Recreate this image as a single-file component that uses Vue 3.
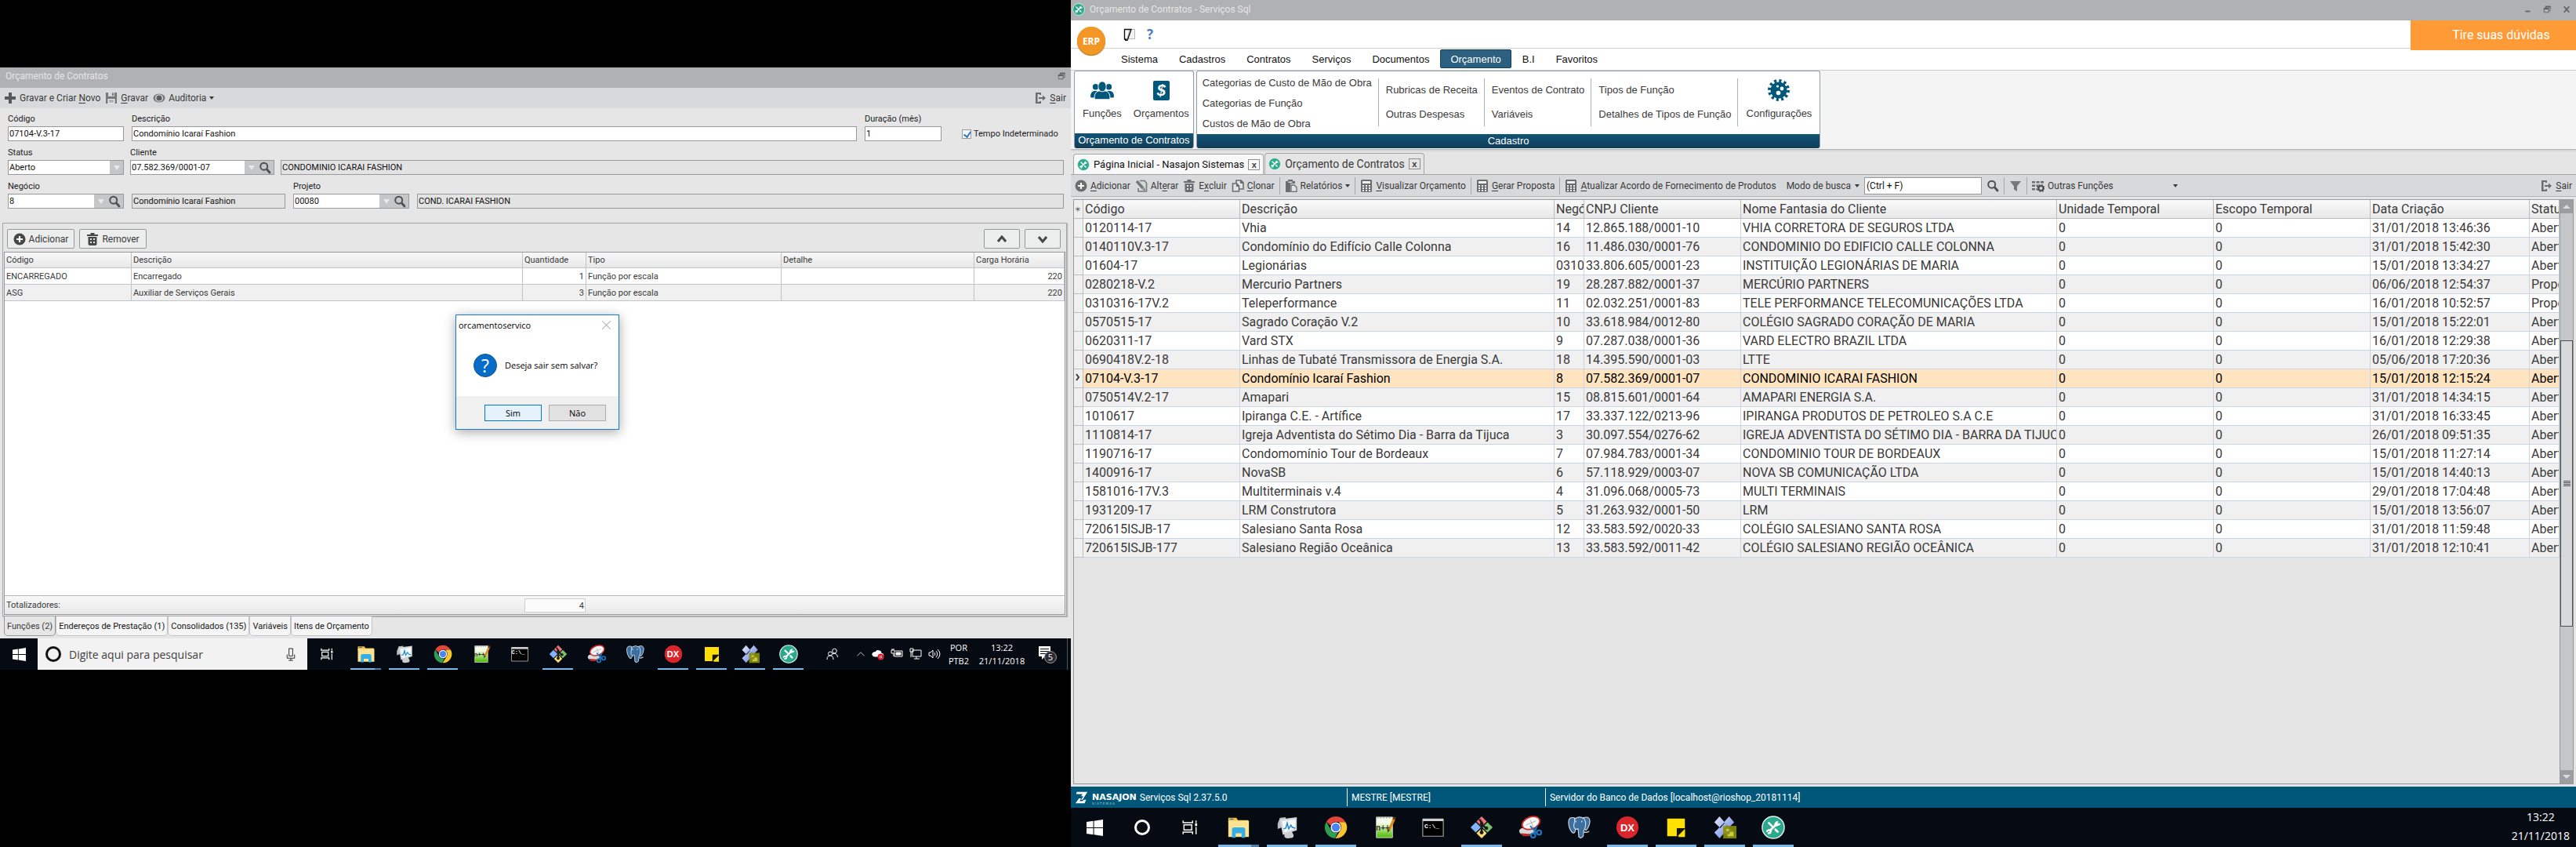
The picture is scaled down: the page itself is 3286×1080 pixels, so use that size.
<script setup>
import { ref } from 'vue'

const codigo = ref('07104-V.3-17')
const descricao = ref('Condomínio Icaraí Fashion')
const duracao = ref('1')
const indeterminado = ref(true)
const cliente = ref('07.582.369/0001-07')
const negocio = ref('8')
const projeto = ref('00080')
const busca = ref('(Ctrl + F)')

const funcoes = [
  { codigo: 'ENCARREGADO', descricao: 'Encarregado', qtd: 1, tipo: 'Função por escala', detalhe: '', carga: 220 },
  { codigo: 'ASG', descricao: 'Auxiliar de Serviços Gerais', qtd: 3, tipo: 'Função por escala', detalhe: '', carga: 220 },
]
const abasInferiores = ['Funções (2)', 'Endereços de Prestação (1)', 'Consolidados (135)', 'Variáveis', 'Itens de Orçamento']

const menus = ['Sistema', 'Cadastros', 'Contratos', 'Serviços', 'Documentos', 'Orçamento', 'B.I', 'Favoritos']
const cadastros = [
  ['Categorias de Custo de Mão de Obra', 'Categorias de Função', 'Custos de Mão de Obra'],
  ['Rubricas de Receita', 'Outras Despesas'],
  ['Eventos de Contrato', 'Variáveis'],
  ['Tipos de Função', 'Detalhes de Tipos de Função'],
]

const colunas = ['Código', 'Descrição', 'Negócio', 'CNPJ Cliente', 'Nome Fantasia do Cliente', 'Unidade Temporal', 'Escopo Temporal', 'Data Criação', 'Status']
const contratos = [
  ['0120114-17', 'Vhia', '14', '12.865.188/0001-10', 'VHIA CORRETORA DE SEGUROS LTDA', '31/01/2018 13:46:36', 'Aberto'],
  ['0140110V.3-17', 'Condomínio do Edifício Calle Colonna', '16', '11.486.030/0001-76', 'CONDOMINIO DO EDIFICIO CALLE COLONNA', '31/01/2018 15:42:30', 'Aberto'],
  ['01604-17', 'Legionárias', '0310', '33.806.605/0001-23', 'INSTITUIÇÃO LEGIONÁRIAS DE MARIA', '15/01/2018 13:34:27', 'Aberto'],
  ['0280218-V.2', 'Mercurio Partners', '19', '28.287.882/0001-37', 'MERCÚRIO PARTNERS', '06/06/2018 12:54:37', 'Proposta'],
  ['0310316-17V.2', 'Teleperformance', '11', '02.032.251/0001-83', 'TELE PERFORMANCE TELECOMUNICAÇÕES LTDA', '16/01/2018 10:52:57', 'Proposta'],
  ['0570515-17', 'Sagrado Coração V.2', '10', '33.618.984/0012-80', 'COLÉGIO SAGRADO CORAÇÃO DE MARIA', '15/01/2018 15:22:01', 'Aberto'],
  ['0620311-17', 'Vard STX', '9', '07.287.038/0001-36', 'VARD ELECTRO BRAZIL LTDA', '16/01/2018 12:29:38', 'Aberto'],
  ['0690418V.2-18', 'Linhas de Tubaté Transmissora de Energia S.A.', '18', '14.395.590/0001-03', 'LTTE', '05/06/2018 17:20:36', 'Aberto'],
  ['07104-V.3-17', 'Condomínio Icaraí Fashion', '8', '07.582.369/0001-07', 'CONDOMINIO ICARAI FASHION', '15/01/2018 12:15:24', 'Aberto'],
  ['0750514V.2-17', 'Amapari', '15', '08.815.601/0001-64', 'AMAPARI ENERGIA S.A.', '31/01/2018 14:34:15', 'Aberto'],
  ['1010617', 'Ipiranga C.E. - Artífice', '17', '33.337.122/0213-96', 'IPIRANGA PRODUTOS DE PETROLEO S.A C.E', '31/01/2018 16:33:45', 'Aberto'],
  ['1110814-17', 'Igreja Adventista do Sétimo Dia - Barra da Tijuca', '3', '30.097.554/0276-62', 'IGREJA ADVENTISTA DO SÉTIMO DIA - BARRA DA TIJUCA', '26/01/2018 09:51:35', 'Aberto'],
  ['1190716-17', 'Condomomínio Tour de Bordeaux', '7', '07.984.783/0001-34', 'CONDOMINIO TOUR DE BORDEAUX', '15/01/2018 11:27:14', 'Aberto'],
  ['1400916-17', 'NovaSB', '6', '57.118.929/0003-07', 'NOVA SB COMUNICAÇÃO LTDA', '15/01/2018 14:40:13', 'Aberto'],
  ['1581016-17V.3', 'Multiterminais v.4', '4', '31.096.068/0005-73', 'MULTI TERMINAIS', '29/01/2018 17:04:48', 'Aberto'],
  ['1931209-17', 'LRM Construtora', '5', '31.263.932/0001-50', 'LRM', '15/01/2018 13:56:07', 'Aberto'],
  ['720615ISJB-17', 'Salesiano Santa Rosa', '12', '33.583.592/0020-33', 'COLÉGIO SALESIANO SANTA ROSA', '31/01/2018 11:59:48', 'Aberto'],
  ['720615ISJB-177', 'Salesiano Região Oceânica', '13', '33.583.592/0011-42', 'COLÉGIO SALESIANO REGIÃO OCEÂNICA', '31/01/2018 12:10:41', 'Aberto'],
].map((r) => ({ cells: [r[0], r[1], r[2], r[3], r[4], '0', '0', r[5], r[6]], ativo: r[0] === '07104-V.3-17' }))

const apps = [
  { id: 'folder', on: true, multi: true },
  { id: 'monitor', on: true },
  { id: 'chrome', on: true },
  { id: 'notepad', text: 'n++' },
  { id: 'cmd', text: 'C:\\_' },
  { id: 'git', on: true },
  { id: 'snip' },
  { id: 'elephant' },
  { id: 'dx', on: true, text: 'DX' },
  { id: 'sticky', on: true },
  { id: 'diamonds', on: true },
  { id: 'tools', on: true },
]
</script>

<template>
  <div class="desktop">
    <svg class="sprite" aria-hidden="true">
      <linearGradient id="g-pad" x1="0" y1="0" x2="0" y2="1"><stop offset="0.3" stop-color="#f4fbe8" /><stop offset="0.9" stop-color="#5fc21a" /></linearGradient>
      <linearGradient id="g-dia" x1="0" y1="0" x2="1" y2="1"><stop offset="0" stop-color="#e3eaff" /><stop offset="1" stop-color="#5a78d8" /></linearGradient>
      <symbol id="i-win" viewBox="0 0 16 16"><path fill="#fff" d="M0 2.3 6.5 1.4V7.6H0zM7.3 1.3 16 0v7.6H7.3zM0 8.4h6.5v6.2L0 13.7zM7.3 8.4H16V16l-8.7-1.3z" /></symbol>
      <symbol id="i-task" viewBox="0 0 20 20"><g fill="none" stroke="#fff" stroke-width="1.3"><path d="M2 2v2.5h11V2M3 7h9v6H3zM2 18v-2.500h11V18M17 2v3M17 9.500V18" /></g><path fill="#fff" d="M15.800 5.500h2.500v3h-2.500z" /></symbol>
      <symbol id="i-folder" viewBox="0 0 32 32"><path fill="#f5c33b" d="M2 3h11l2 3h14v4H2z" /><path fill="#ffe395" d="M2 7h28v22H2z" /><path fill="#37ade6" d="M7 30V19q0-3 3-3h12q3 0 3 3v11h-5v-6h-8v6z" /><path fill="#3f6db5" d="M4 4h5v1.500H4z" /></symbol>
      <symbol id="i-monitor" viewBox="0 0 32 32"><path fill="#b9bdc0" d="M3 11 6 3l8-1v12L3 18z" /><path fill="#c9cdd0" d="M12 27q0-3 3-4l7-2 2 4q2 3-1 5l-6 1q-5 0-5-4z" /><path fill="#d4d8db" d="M6 5 29 2v18L10 26z" /><path fill="#f4f9fd" d="M9 7.500 27 5v12.500L12 23z" /><path d="m11 18 3-1 2-7 2 8 3-5 2 3 4 1" fill="none" stroke="#1d87c9" stroke-width="1.600" /></symbol>
      <symbol id="i-chrome" viewBox="0 0 32 32"><path fill="#e2453a" d="M16 1a15 15 0 0 1 13 7.500H16a7.500 7.500 0 0 0-7 5L3.200 8.200A15 15 0 0 1 16 1z" /><path fill="#fbc52d" d="M29.200 8.700A15 15 0 0 1 15.500 31l7-11.500a7.500 7.500 0 0 0 0-7.500L20 8.700z" /><path fill="#2f9e52" d="M3.200 8.200 9.300 19.500A7.500 7.500 0 0 0 18.500 23L15 31A15 15 0 0 1 3.200 8.200z" /><circle cx="16" cy="16" r="7" fill="#fff" /><circle cx="16" cy="16" r="5.500" fill="#4a84f0" /></symbol>
      <symbol id="i-notepad" viewBox="0 0 32 32"><path fill="url(#g-pad)" stroke="#d0d4c8" d="M5 2h22v28H5z" /><path stroke="#999" stroke-dasharray="2 2" stroke-width="2" d="M6 2.500h20" /><path stroke="#e28b12" stroke-width="3.500" d="M29 5 22 20" /><path stroke="#703a18" stroke-width="3.500" d="m30 2-1 3" /><path fill="#333" d="m20.500 18 3 2-3.500 3z" /></symbol>
      <symbol id="i-cmd" viewBox="0 0 32 32"><path fill="#000" stroke="#a5a5a5" stroke-width="1.200" d="M2 5h28v23H2z" /><path fill="#cfcfcf" d="M2 4h28v3.500H2z" /></symbol>
      <symbol id="i-git" viewBox="0 0 32 32"><path fill="#f0737b" d="m16 1 7 7-7 7-7-7z" /><path fill="#82b4ff" d="m8 9 7 7-7 7-7-7z" /><path fill="#7cc46b" d="m24 9 7 7-7 7-7-7z" /><path fill="#fbdc78" d="m16 17 7 7-7 7-7-7z" /><path fill="none" stroke="#1b1b1b" stroke-width="2.600" d="M13 5l3 4v14M16 12l6 5" /><circle cx="16" cy="11" r="2.400" fill="#1b1b1b" /><circle cx="16" cy="23" r="2.600" fill="#1b1b1b" /><circle cx="22.500" cy="17" r="2.400" fill="#1b1b1b" /></symbol>
      <symbol id="i-snip" viewBox="0 0 32 32"><path fill="#d9d9d9" d="M1 20q2-4 8-3l14 2-4 6-13 1q-5-1-5-6z" /><path fill="#b52a2a" d="M3 24l14 1-2 3H6z" /><ellipse cx="17" cy="10" rx="12.500" ry="8" transform="rotate(-22 17 10)" fill="#f8f8f8" stroke="#d42b2b" stroke-width="2" /><path stroke="#aaa" d="M10 13 24 7M16 6l4 9" /><g fill="none" stroke="#1d78c2" stroke-width="2.200"><path d="m16 14 9 10M25 14l-4 11" /><circle cx="20" cy="27" r="3" /><circle cx="28" cy="23" r="3" /></g></symbol>
      <symbol id="i-elephant" viewBox="0 0 32 32"><g fill="#3b6fa0" stroke="#d6dde4" stroke-width="1.200"><path d="M10 3Q2 1 2 9q0 8 5 14 3 2 4-2l1-5z" /><path d="M22 3q8-3 9 4 0 7-5 13l-4-3z" /><path d="M11 4q6-4 12 0 4 5 1 14-2 3-2 10-3 4-6 1l-1-11q-5 2-6-4z" /></g><path d="M23 22q3 2 7-1M20 7v2M12 7v2" stroke="#d6dde4" stroke-width="1.500" fill="none" /></symbol>
      <symbol id="i-dx" viewBox="0 0 32 32"><circle cx="16" cy="16" r="15" fill="#d9262c" /></symbol>
      <symbol id="i-sticky" viewBox="0 0 32 32"><path fill="#ffe000" d="M4 4h24v24H4z" /><path fill="#111" d="M17 29V17h12z" /><path fill="#ffe000" d="M19 29h9V19z" /></symbol>
      <symbol id="i-diamonds" viewBox="0 0 32 32"><g fill="url(#g-dia)"><path d="m9 1 7 8-7 7-7-7zM22 1l7 8-7 7-7-7zM16 10l6 7-6 6-6-6zM9 16l7 7-7 8-7-8zM22 16l7 7-7 8-7-8z" /></g><path fill="#898f05" fill-opacity="0.900" d="M14 14h18v17H14z" /><path fill="#c8cc42" d="M18 18h4v3h-4zM23 22h5v6h-8v-3h3z" /></symbol>
      <symbol id="i-tools" viewBox="0 0 32 32"><circle cx="16" cy="16" r="15" fill="#2ba98c" stroke="#e7f4f0" stroke-width="1.500" /><g stroke="#fff" stroke-linecap="round" fill="none"><path stroke-width="3" d="m12 20 9-9M10 10l4 4M19 19l3 3" /><path stroke-width="2.600" d="M21.500 8.500q-4 2-2 5l5-2M7.500 21q4-3 5 0 0 3-3 3" /></g></symbol>
      <symbol id="i-plus" viewBox="0 0 16 16"><path fill="#58585a" d="M6 1h4v5h5v4h-5v5H6v-5H1V6h5z" /></symbol>
      <symbol id="i-save" viewBox="0 0 16 16"><path fill="#77787a" d="M1 1h3v5h8V1h3v14H1zM9 1.500h2V5H9z" /><path fill="#ececec" d="M3.500 9h9v6h-9z" /><path stroke="#77787a" d="M5 11h6M5 13h6" /></symbol>
      <symbol id="i-eye" viewBox="0 0 16 16"><ellipse cx="8" cy="8" rx="7.500" ry="5.500" fill="#77787a" /><ellipse cx="8" cy="8" rx="5" ry="4.500" fill="#e1e1e1" /><circle cx="8" cy="8" r="3.600" fill="#5c5d5f" /></symbol>
      <symbol id="i-exit" viewBox="0 0 16 16"><path fill="#6b6c6e" d="M2 1h7v3H7V3H4.500v10H7v-1h2v3H2zM6 7h5V4.500L15 8l-4 3.500V9H6z" /></symbol>
      <symbol id="i-search" viewBox="0 0 16 16"><circle cx="6.700" cy="6.200" r="4.500" fill="none" stroke="#4e4f51" stroke-width="2" /><path stroke="#4e4f51" stroke-width="2.800" stroke-linecap="round" d="m10.500 10 3.500 4" /></symbol>
      <symbol id="i-add" viewBox="0 0 16 16"><circle cx="8" cy="8" r="7.500" fill="currentColor" /><path stroke="#fff" stroke-width="2.200" d="M8 4v8M4 8h8" /></symbol>
      <symbol id="i-trash" viewBox="0 0 16 16"><path fill="currentColor" d="M5.500 0h5v2H15v2H1V2h4.500zM2.500 5h11v9q0 2-2 2h-7q-2 0-2-2z" /><path fill="#e5e5e5" d="M5 7h2v2H5zM9 7h2v2H9zM5 11h2v2H5zM9 11h2v2H9z" /></symbol>
      <symbol id="i-edit" viewBox="0 0 16 16"><path fill="none" stroke="#77787a" stroke-width="1.600" d="M6 1.500h6l2.500 3V15H4v-4" /><path stroke="#77787a" stroke-width="3.500" d="m2 2 8 9" /><path fill="#77787a" d="m12 10 1 4-4-1z" /></symbol>
      <symbol id="i-copy" viewBox="0 0 16 16"><g fill="#e2e3e4" stroke="#6b6c6e" stroke-width="1.600"><path d="M6 1h6l3 3v8H6z" /><path d="M1.500 5h5l3 3v7h-8z" /></g><path fill="#6b6c6e" d="M11 1h1l3 3v1h-4zM6 5h1l3 3v1H6z" /></symbol>
      <symbol id="i-report" viewBox="0 0 16 16"><path fill="#6b6c6e" d="M1 2h3V0h6v2h3v3H7v11H1z" /><path fill="#e2e3e4" d="M4.500 2.500h5V4h-5z" /><path fill="#e2e3e4" stroke="#6b6c6e" stroke-width="1.300" d="M8 7h4l3 3v5.500H8z" /></symbol>
      <symbol id="i-calc" viewBox="0 0 16 16"><rect x="1" width="14" height="16" rx="1.500" fill="#6b6c6e" /><path fill="#f0f0f0" d="M3 2h10v3H3zM3 7h2v2H3zM7 7h2v2H7zM11 7h2v2h-2zM3 10h2v2H3zM7 10h2v2H7zM11 10h2v2h-2zM3 13h2v2H3zM7 13h2v2H7zM11 13h2v2h-2z" /></symbol>
      <symbol id="i-funnel" viewBox="0 0 16 16"><path fill="#77787a" d="M1 2h14L10 8.500V15l-4-2.500V8.500z" /></symbol>
      <symbol id="i-other" viewBox="0 0 16 16"><path fill="#6b6c6e" d="M0 2h4v2.500H0zM5.500 2h4v2.500h-4zM11 2h4v2.500h-4zM0 6.500h4V9H0zM5.500 6.500h3V9h-3zM0 11h4v2.500H0zM5.500 11H7v2.500H5.500z" /><circle cx="11.500" cy="11" r="3" fill="none" stroke="#4f5052" stroke-width="2.200" /><circle cx="11.500" cy="11" r="4.300" fill="none" stroke="#4f5052" stroke-width="1.500" stroke-dasharray="1.700 1.700" /></symbol>
      <symbol id="i-restore" viewBox="0 0 12 12"><path fill="none" stroke="#5e5f61" stroke-width="1" d="M1.500 4.500h7v6h-7zM4 4V1.500h7V8H8.500" /><path fill="#5e5f61" stroke="none" d="M1 4h8v2H1zM3.500 1h8v2h-8z" /></symbol>
      <symbol id="i-people" viewBox="0 0 32 25"><g fill="#00577a"><circle cx="7" cy="7.500" r="4" /><circle cx="25" cy="7.500" r="4" /><path d="M0 21q0-7 5-8h4l3 9H1zM32 21q0-7-5-8h-4l-3 9h11z" /></g><g fill="#00577a" stroke="#fff"><path d="M5.500 24.500V20q1-6 6-7h9q5 1 6 7v4.500z" /><ellipse cx="16" cy="7" rx="5.500" ry="7" /></g></symbol>
      <symbol id="i-gear" viewBox="0 0 28 28"><circle cx="14" cy="14" r="12" fill="none" stroke="#00577a" stroke-width="4" stroke-dasharray="3.100 3.183" /><circle cx="14" cy="14" r="10.500" fill="#00577a" /><g fill="#fff"><circle cx="13.500" cy="17.500" r="2.800" /><circle cx="18" cy="12" r="2.400" /><circle cx="12.500" cy="9" r="1.600" /></g></symbol>
    </svg>

    <section class="screen-left">
      <main class="form-window">
        <header class="title-bar">
          <span>Orçamento de Contratos</span>
          <button class="caption-btn" aria-label="Restaurar"><svg><use href="#i-restore" /></svg></button>
        </header>
        <div class="tool-row">
          <button class="tool"><svg><use href="#i-plus" /></svg><span>Gravar e Criar <u>N</u>ovo</span></button>
          <button class="tool"><svg><use href="#i-save" /></svg><span><u>G</u>ravar</span></button>
          <button class="tool"><svg><use href="#i-eye" /></svg><span>Auditoria</span><i class="caret"></i></button>
          <button class="tool push"><svg><use href="#i-exit" /></svg><span><u>S</u>air</span></button>
        </div>

        <form class="form" @submit.prevent>
          <div class="row">
            <div class="field code"><label for="codigo">Código</label><input id="codigo" v-model="codigo" /></div>
            <div class="field grow"><label for="descricao">Descrição</label><input id="descricao" v-model="descricao" /></div>
            <div class="field months"><label for="duracao">Duração (mês)</label><input id="duracao" v-model="duracao" /></div>
            <div class="check"><input id="indet" v-model="indeterminado" type="checkbox" /><label for="indet">Tempo Indeterminado</label></div>
          </div>
          <div class="row tight">
            <div class="field code">
              <label for="status">Status</label>
              <div class="combo"><select id="status"><option>Aberto</option></select><i class="drop"></i></div>
            </div>
            <div class="field client">
              <label for="cliente">Cliente</label>
              <div class="combo"><input id="cliente" v-model="cliente" /><button class="drop" aria-label="Abrir lista"></button><button class="find" aria-label="Pesquisar cliente"><svg><use href="#i-search" /></svg></button></div>
            </div>
            <div class="field grow"><input value="CONDOMINIO ICARAI FASHION" aria-label="Nome do cliente" readonly /></div>
          </div>
          <div class="row">
            <div class="field code">
              <label for="negocio">Negócio</label>
              <div class="combo"><input id="negocio" v-model="negocio" /><button class="drop" aria-label="Abrir lista"></button><button class="find" aria-label="Pesquisar negócio"><svg><use href="#i-search" /></svg></button></div>
            </div>
            <div class="field deal"><input value="Condomínio Icaraí Fashion" aria-label="Nome do negócio" readonly /></div>
            <div class="field code">
              <label for="projeto">Projeto</label>
              <div class="combo"><input id="projeto" v-model="projeto" /><button class="drop" aria-label="Abrir lista"></button><button class="find" aria-label="Pesquisar projeto"><svg><use href="#i-search" /></svg></button></div>
            </div>
            <div class="field grow"><input value="COND. ICARAI FASHION" aria-label="Nome do projeto" readonly /></div>
          </div>
        </form>

        <section class="panel">
          <div class="panel-tools">
            <button class="btn"><svg><use href="#i-add" /></svg>Adicionar</button>
            <button class="btn"><svg><use href="#i-trash" /></svg>Remover</button>
            <button class="btn arrow push" aria-label="Mover para cima"><svg viewBox="0 0 12 10"><path d="m1 8 5-6 5 6" /></svg></button>
            <button class="btn arrow" aria-label="Mover para baixo"><svg viewBox="0 0 12 10"><path d="m1 2 5 6 5-6" /></svg></button>
          </div>
          <div class="roles">
            <table>
              <colgroup><col class="r1" /><col /><col class="r3" /><col class="r4" /><col class="r5" /><col class="r6" /></colgroup>
              <thead><tr><th>Código</th><th>Descrição</th><th>Quantidade</th><th>Tipo</th><th>Detalhe</th><th>Carga Horária</th></tr></thead>
              <tbody>
                <tr v-for="f in funcoes" :key="f.codigo">
                  <td>{{ f.codigo }}</td><td>{{ f.descricao }}</td><td class="num">{{ f.qtd }}</td><td>{{ f.tipo }}</td><td>{{ f.detalhe }}</td><td class="num">{{ f.carga }}</td>
                </tr>
              </tbody>
            </table>
            <footer class="totals"><span>Totalizadores:</span><output>4</output></footer>
          </div>
        </section>
        <nav class="bottom-tabs">
          <button v-for="(t, i) in abasInferiores" :key="t" :class="{ active: i === 0 }">{{ t }}</button>
        </nav>

        <div class="dialog" role="dialog" aria-labelledby="dlg-title">
          <header><span id="dlg-title">orcamentoservico</span><button aria-label="Fechar"><svg viewBox="0 0 10 10"><path d="m0 0 10 10M10 0 0 10" /></svg></button></header>
          <p><span class="question">?</span>Deseja sair sem salvar?</p>
          <footer><button class="primary">Sim</button><button>Não</button></footer>
        </div>
      </main>

      <nav class="taskbar small">
        <button class="start" aria-label="Iniciar"><svg><use href="#i-win" /></svg></button>
        <div class="search">
          <i class="ring"></i>
          <input placeholder="Digite aqui para pesquisar" aria-label="Pesquisar" />
          <svg viewBox="0 0 12 18"><path d="M3.500 1h5v10h-5zM1 9v5h10V9M6 14v3M3 17h6" /></svg>
        </div>
        <button class="sys" aria-label="Visão de tarefas"><svg><use href="#i-task" /></svg></button>
        <button v-for="a in apps" :key="a.id" class="app" :class="[a.id, { on: a.on, multi: a.multi }]" :aria-label="a.id"><svg><use :href="'#i-' + a.id" /></svg><span v-if="a.text">{{ a.text }}</span></button>
        <div class="tray">
          <svg viewBox="0 0 16 16"><g><circle cx="10.500" cy="4" r="2.800" /><circle cx="5" cy="7.500" r="2.500" /><path d="M1 15q0-5 4-5t4 5M7.500 8q6-2.500 7 4" /></g></svg>
          <svg class="chevron" viewBox="0 0 16 16"><path d="m2 11 6-6 6 6" /></svg>
          <svg viewBox="0 0 16 16"><path fill="#fff" d="M3 11q-3-1-2-4 2-2 3-1 2-4 6-2 2 0 2 3 3 0 3 3l-1 1z" /><circle cx="11.500" cy="11.500" r="4" fill="#e02030" stroke="none" /><path d="m10 10 3 3m0-3-3 3" /></svg>
          <svg viewBox="0 0 16 16"><path d="M5 4h10v7H5zM1 3h4M2 1v2M4 1v2M1 3v4h3v4" /><path fill="#fff" d="M7 6h6v3H7z" /></svg>
          <svg viewBox="0 0 16 16"><path d="M4 3h11v8H4zM9 11v3M6 14h7M1 1h4v4H1zM2 5v7" /></svg>
          <svg viewBox="0 0 16 16"><path d="M1 6h2l3-3v10L3 10H1zM8 6q2 2 0 4M10 4q3.500 4 0 8M12 2q6 6 0 12" /></svg>
          <span class="lang">POR<br />PTB2</span>
          <time>13:22<br />21/11/2018</time>
          <button class="notice" aria-label="Notificações"><svg viewBox="0 0 24 24"><path fill="#fff" stroke="none" d="M1 2h15v13H9l-4 4v-4H1z" /><path stroke="#05080f" d="M3 5.500h11M3 8.500h11M3 11.500h7" /><circle cx="16" cy="16" r="7.500" fill="#2b2d32" stroke="#999" /></svg><span>5</span></button>
        </div>
      </nav>
    </section>

    <section class="screen-right">
      <header class="title-bar main-title">
        <svg class="app-icon"><use href="#i-tools" /></svg>
        <span>Orçamento de Contratos - Serviços Sql</span>
        <div class="captions">
          <button aria-label="Minimizar"><svg viewBox="0 0 12 12"><path d="M3 9h7" /></svg></button>
          <button aria-label="Restaurar"><svg><use href="#i-restore" /></svg></button>
          <button aria-label="Fechar"><svg viewBox="0 0 12 12"><path d="m2 1.500 8 9M10 1.500l-8 9" /></svg></button>
        </div>
      </header>
      <div class="quick">
        <button class="erp">ERP</button>
        <button class="quick-btn" aria-label="Personalizar"><svg viewBox="0 0 16 16"><path fill="#f3f3f3" stroke="#b9b9b9" d="M8 1.500h6.500v12H6" /><path fill="#d3d3d3" stroke="#111" stroke-width="1.400" d="M7 1.500H1.500V14H4M1 1.500h9L5 15.500H2" /></svg></button>
        <button class="quick-btn help" aria-label="Ajuda">?</button>
        <a class="doubts" href="#">Tire suas dúvidas</a>
      </div>
      <nav class="menu">
        <button v-for="m in menus" :key="m" :class="{ active: m === 'Orçamento' }">{{ m }}</button>
      </nav>
      <div class="ribbon">
        <section class="group">
          <div class="group-body">
            <button class="big"><svg><use href="#i-people" /></svg>Funções</button>
            <button class="big"><span class="money">$</span>Orçamentos</button>
          </div>
          <h2>Orçamento de Contratos</h2>
        </section>
        <section class="group">
          <div class="group-body">
            <div v-for="(col, i) in cadastros" :key="i" class="links"><a v-for="l in col" :key="l" href="#">{{ l }}</a></div>
            <button class="big config"><svg><use href="#i-gear" /></svg>Configurações</button>
          </div>
          <h2>Cadastro</h2>
        </section>
      </div>
      <div class="doc-tabs">
        <div class="doc-tab home"><svg><use href="#i-tools" /></svg><a href="#">Página Inicial - Nasajon Sistemas</a><button aria-label="Fechar aba">x</button></div>
        <div class="doc-tab current"><svg><use href="#i-tools" /></svg><a href="#">Orçamento de Contratos</a><button aria-label="Fechar aba">x</button></div>
      </div>
      <div class="tool-row grid-tools">
        <button class="tool"><svg><use href="#i-add" /></svg><span><u>A</u>dicionar</span></button>
        <button class="tool"><svg><use href="#i-edit" /></svg><span>Alt<u>e</u>rar</span></button>
        <button class="tool"><svg><use href="#i-trash" /></svg><span>E<u>x</u>cluir</span></button>
        <button class="tool"><svg><use href="#i-copy" /></svg><span><u>C</u>lonar</span></button>
        <i class="sep"></i>
        <button class="tool"><svg><use href="#i-report" /></svg><span>Relatórios</span><i class="caret"></i></button>
        <i class="sep"></i>
        <button class="tool"><svg><use href="#i-calc" /></svg><span><u>V</u>isualizar Orçamento</span></button>
        <i class="sep"></i>
        <button class="tool"><svg><use href="#i-calc" /></svg><span><u>G</u>erar Proposta</span></button>
        <i class="sep"></i>
        <button class="tool"><svg><use href="#i-calc" /></svg><span><u>A</u>tualizar Acordo de Fornecimento de Produtos</span></button>
        <button class="tool mode"><span>Modo de busca</span><i class="caret"></i></button>
        <input v-model="busca" aria-label="Busca" />
        <button class="tool" aria-label="Buscar"><svg><use href="#i-search" /></svg></button>
        <i class="sep"></i>
        <button class="tool" aria-label="Filtrar"><svg><use href="#i-funnel" /></svg></button>
        <i class="sep"></i>
        <button class="tool others"><svg><use href="#i-other" /></svg><span>Outras Funções</span><i class="caret"></i></button>
        <button class="tool push"><svg><use href="#i-exit" /></svg><span><u>S</u>air</span></button>
      </div>
      <main class="contracts">
        <div class="table-box">
          <table>
            <colgroup><col class="c0" /><col class="c1" /><col class="c2" /><col class="c3" /><col class="c1" /><col /><col class="c1" /><col class="c1" /><col class="c8" /><col class="c3" /></colgroup>
            <thead><tr><th class="mark">✳</th><th v-for="c in colunas" :key="c">{{ c }}</th></tr></thead>
            <tbody>
              <tr v-for="r in contratos" :key="r.cells[0]" :class="{ selected: r.ativo }">
                <td class="mark"><svg v-if="r.ativo" viewBox="0 0 6 10"><path d="m1 1 3 4-3 4" /></svg></td>
                <td v-for="(c, i) in r.cells" :key="i">{{ c }}</td>
              </tr>
            </tbody>
          </table>
        </div>
        <div class="scrollbar" aria-hidden="true">
          <i class="up"></i><div class="track"><div class="thumb"></div></div><i class="down"></i>
        </div>
      </main>
      <footer class="status">
        <div class="version">
          <svg viewBox="0 0 20 18"><path fill="#fff" d="M3 1h13l-4 6H9l2-3H2zM18 1 11 12h5l-2 5H1l5-7h3l-2 4h4l2-2H9l5-8 2-3z" /></svg>
          <span class="brand"><b>NASAJON</b><small>S I S T E M A S</small></span>
          <span>Serviços Sql 2.37.5.0</span>
        </div>
        <div class="user">MESTRE [MESTRE]</div>
        <div>Servidor do Banco de Dados [localhost@rioshop_20181114]</div>
      </footer>
      <nav class="taskbar large">
        <button class="start" aria-label="Iniciar"><svg><use href="#i-win" /></svg></button>
        <button class="sys" aria-label="Cortana"><i class="ring"></i></button>
        <button class="sys" aria-label="Visão de tarefas"><svg><use href="#i-task" /></svg></button>
        <button v-for="a in apps" :key="a.id" class="app" :class="[a.id, { on: a.on, multi: a.multi }]" :aria-label="a.id"><svg><use :href="'#i-' + a.id" /></svg><span v-if="a.text">{{ a.text }}</span></button>
        <time>13:22<br />21/11/2018</time>
      </nav>
    </section>
  </div>
</template>

<style>
body {
  margin: 0;
  background: #000;
}
</style>

<style scoped>
* {
  box-sizing: border-box;
}
.desktop {
  display: flex;
  min-height: 100vh;
  font-family: Roboto, sans-serif;
  font-size: 12px;
  color: #3a3a3a;
  white-space: nowrap;
}
.sprite {
  position: absolute;
  width: 0;
  height: 0;
}
button {
  font: inherit;
  color: inherit;
  background: none;
  border: 0;
  padding: 0;
}
input,
select {
  font: inherit;
  color: #111;
  min-width: 0;
}
a {
  color: inherit;
  text-decoration: none;
}
table {
  border-collapse: separate;
  border-spacing: 0;
  table-layout: fixed;
  width: 100%;
}
th {
  font-weight: 400;
  text-align: left;
}
.push {
  margin-left: auto !important;
}

/* left monitor */
.screen-left {
  width: 41.57%;
  padding-top: 86px;
  background: #000;
}
.form-window {
  position: relative;
  display: flex;
  flex-direction: column;
  min-height: 728px;
  background: #e6e6e6;
}
.title-bar {
  display: flex;
  align-items: center;
  flex: none;
  height: 26px;
  padding: 0 6px 4px 7px;
  background: #b0b1b3;
  color: #e6e6e6;
}
.caption-btn {
  margin-left: auto;
}
.title-bar button svg {
  display: block;
  width: 12px;
  height: 10px;
  fill: none;
  stroke: #5e5f61;
  stroke-width: 2;
}
.tool-row {
  display: flex;
  align-items: center;
  flex: none;
  height: 26px;
  gap: 6px;
  padding: 0 6px 0 5px;
  background: #d8d9db;
}
.tool {
  display: flex;
  align-items: center;
  gap: 4px;
  color: #3a3a3a;
}
.tool svg {
  width: 16px;
  height: 16px;
  color: #6b6c6e;
}
u {
  text-underline-offset: 2px;
}
.caret {
  border: 3px solid transparent;
  border-top: 4px solid #3a3a3a;
  border-bottom: 0;
}
.form {
  display: flex;
  flex-direction: column;
  gap: 8px;
  padding: 7px 9px 18px 10px;
  font-size: 11px;
  color: #1c1c1c;
}
.row {
  display: flex;
  align-items: flex-end;
  gap: 10px;
}
.row.tight {
  gap: 8px;
}
.field {
  display: flex;
  flex-direction: column;
}
.field > label {
  height: 16px;
  line-height: 14px;
}
.field > input,
.combo {
  width: 100%;
  height: 19px;
  padding: 0 1px;
  border: 1px solid #98999b;
  background: #fff;
}
.field > input[readonly] {
  background: #e3e3e3;
}
.grow {
  flex: 1;
}
.code {
  width: 148px;
}
.months {
  width: 98px;
}
.client {
  width: 184px;
}
.deal {
  width: 196px;
}
.check {
  display: flex;
  align-items: center;
  gap: 3px;
  height: 19px;
  margin-left: 16px;
  width: 130px;
}
.check input {
  appearance: none;
  width: 12px;
  height: 12px;
  margin: 0;
  border: 1px solid #98999b;
  background: #f3f6fa;
  position: relative;
}
.check input:checked::after {
  content: '';
  position: absolute;
  left: 3px;
  top: 0;
  width: 4px;
  height: 7px;
  border: solid #3576c4;
  border-width: 0 2px 2px 0;
  rotate: 35deg;
}
.combo {
  display: flex;
  padding: 0;
}
.combo input,
.combo select {
  flex: 1;
  width: 0;
  border: 0;
  padding: 0 1px;
  background: none;
  appearance: none;
}
.drop {
  width: 17px;
  background: #c5c6c8;
  display: grid;
  place-items: center;
}
.drop::after {
  content: '';
  border: 4px solid transparent;
  border-top: 6px solid #e9e9e9;
  border-bottom: 0;
}
.find {
  width: 20px;
  background: #c5c6c8;
}
.find svg {
  display: block;
  width: 18px;
  height: 16px;
}
.panel {
  display: flex;
  flex-direction: column;
  flex: 1;
  margin: 0 5px 0 3px;
  border: 1px solid #a5a6a8;
  box-shadow: 1px 1px 1px #b5b6b8;
  padding: 7px 1px 1px;
}
.panel-tools {
  display: flex;
  gap: 6px;
  height: 29px;
  padding: 0 6px 4px 4px;
}
.btn {
  display: flex;
  align-items: center;
  justify-content: center;
  gap: 4px;
  width: 86px;
  height: 25px;
  border: 1px solid #98999b;
  border-radius: 2px;
  background: #eceded;
}
.btn svg {
  width: 16px;
  height: 16px;
  color: #464749;
}
.btn.arrow {
  width: 46px;
}
.btn.arrow svg {
  width: 12px;
  height: 10px;
  fill: none;
  stroke: #464749;
  stroke-width: 3;
}
.roles {
  display: flex;
  flex-direction: column;
  flex: 1;
  font-size: 11px;
  border: 1px solid #98999b;
  background: #fff;
}
.roles col.r1 {
  width: 162px;
}
.roles col.r3 {
  width: 81px;
}
.roles col.r4 {
  width: 249px;
}
.roles col.r5 {
  width: 246px;
}
.roles col.r6 {
  width: 115px;
}
.roles th,
.roles td {
  height: 21px;
  padding: 0 2px;
  border-right: 1px solid #c2c3c5;
  border-bottom: 1px solid #c2c3c5;
  overflow: hidden;
}
.roles th {
  height: 20px;
  background: linear-gradient(#f8f8f8, #e8e8e8);
}
.roles tbody tr:nth-child(even) {
  background: #f0f0f0;
}
.roles .num {
  text-align: right;
}
.totals {
  display: flex;
  align-items: center;
  height: 24px;
  margin-top: auto;
  padding-left: 2px;
  border-top: 1px solid #b5b6b8;
  background: linear-gradient(#f8f8f8, #e8e8e8);
}
.totals span {
  flex: 1;
}
.totals output {
  width: 78px;
  height: 18px;
  line-height: 17px;
  margin-right: 611px;
  padding-right: 1px;
  border: 1px solid #cfcfcf;
  background: #fbfbfb;
  text-align: right;
}
.bottom-tabs {
  display: flex;
  height: 28px;
  padding: 0 5px 3px;
  font-size: 11px;
}
.bottom-tabs button {
  padding: 0 3px;
  color: #151515;
  border: 1px solid #c2c3c5;
  border-top: 0;
  border-radius: 0 0 5px 5px;
  background: #f5f5f5;
}
.bottom-tabs .active {
  color: #3a3a3a;
  background: #e6e6e6;
  border-color: #98999b;
}

.dialog {
  position: absolute;
  left: 581px;
  top: 315px;
  width: 209px;
  height: 147px;
  display: flex;
  flex-direction: column;
  font: 11px 'Open Sans', sans-serif;
  color: #000;
  background: #fff;
  border: 1px solid #1a7ad4;
  box-shadow: 0 3px 14px rgba(0, 0, 0, 0.35);
}
.dialog header {
  display: flex;
  justify-content: space-between;
  align-items: center;
  height: 24px;
  padding: 0 10px 0 3px;
}
.dialog header svg {
  display: block;
  width: 11px;
  height: 11px;
  stroke: #b5b5b5;
}
.dialog p {
  flex: 1;
  display: flex;
  align-items: center;
  gap: 10px;
  margin: 0;
  padding-left: 22px;
}
.question {
  width: 30px;
  height: 30px;
  border-radius: 50%;
  border: 1px solid #1c4f83;
  background: #056cc9;
  color: #fff;
  font-size: 23px;
  line-height: 28px;
  text-align: center;
}
.dialog footer {
  display: flex;
  justify-content: flex-end;
  gap: 9px;
  height: 42px;
  padding: 11px 16px 10px;
  background: #f0f0f0;
}
.dialog footer button {
  width: 73px;
  border: 1px solid #adadad;
  background: #e1e1e1;
}
.dialog footer .primary {
  border-color: #0078d7;
  background: #e5f1fb;
}

/* taskbars */
.taskbar {
  display: flex;
  flex: none;
  background: #060a12;
  color: #fff;
  font-family: 'Open Sans', sans-serif;
}
.taskbar > button {
  display: grid;
  place-items: center;
  flex: none;
}
.taskbar svg {
  display: block;
}
.small {
  height: 40px;
}
.small .start {
  width: 48px;
}
.start svg {
  width: 17px;
  height: 17px;
}
.search {
  display: flex;
  align-items: center;
  gap: 10px;
  width: 344px;
  padding: 0 15px 0 10px;
  background: #f2f2f2;
}
.search input {
  flex: 1;
  border: 0;
  padding: 0;
  font-size: 14px;
  background: none;
}
.search input::placeholder {
  color: #3f3f3f;
  opacity: 1;
}
.search svg {
  width: 12px;
  height: 17px;
  fill: none;
  stroke: #222;
  stroke-width: 1;
}
.ring {
  width: 20px;
  height: 20px;
  border: 3px solid #111;
  border-radius: 50%;
}
.small .sys {
  width: 50px;
}
.sys svg {
  width: 18px;
  height: 18px;
}
.small .app {
  width: 49px;
}
.app {
  position: relative;
}
.app svg {
  width: 24px;
  height: 24px;
}
.app > svg,
.app > span {
  grid-area: 1 / 1;
}
.dx > span {
  font: 700 11px 'Liberation Sans', sans-serif;
}
.notepad > span {
  padding-right: 4px;
  font: 700 8px 'Liberation Sans', sans-serif;
  color: #333;
}
.cmd > span {
  padding: 0 3px 4px 0;
  font: 700 7px 'Liberation Mono', monospace;
}
.large .dx > span {
  font-size: 13px;
}
.large .notepad > span {
  font-size: 10px;
}
.large .cmd > span {
  font-size: 8px;
}
.app.on::after {
  content: '';
  position: absolute;
  left: 5px;
  right: 5px;
  bottom: 0;
  height: 2px;
  background: #76b9ed;
}
.app.multi::after {
  background: linear-gradient(90deg, #76b9ed 80%, #527fa5 80%);
}
.tray {
  display: flex;
  align-items: center;
  gap: 8px;
  margin-left: auto;
  padding-right: 13px;
  border-right: 1px solid #555;
  margin-right: 4px;
  font-size: 11px;
  line-height: 17px;
  text-align: center;
}
.tray > svg {
  width: 16px;
  height: 16px;
  fill: none;
  stroke: #fff;
  stroke-width: 1;
}
.tray .chevron {
  width: 12px;
  margin-left: 14px;
}
.lang {
  margin-left: 2px;
}
.tray time {
  width: 60px;
  margin: 0 2px 0 4px;
}
.notice {
  position: relative;
  margin-left: 6px;
  width: 24px;
  height: 24px;
}
.notice svg {
  width: 24px;
  height: 24px;
}
.notice span {
  position: absolute;
  right: 5px;
  bottom: 0;
}
.large {
  height: 50px;
  padding-right: 8px;
}
.large .start,
.large .sys {
  width: 61px;
}
.large .start svg {
  width: 21px;
  height: 21px;
}
.large .sys svg {
  width: 22px;
  height: 22px;
}
.large .ring {
  border-color: #fff;
}
.large .app {
  width: 62px;
}
.large .app svg {
  width: 30px;
  height: 30px;
}
.large .app.on::after {
  height: 3px;
}
.large time {
  margin-left: auto;
  font-size: 14px;
  line-height: 24px;
  text-align: center;
}

/* right monitor */
.screen-right {
  flex: 1;
  min-width: 0;
  display: flex;
  flex-direction: column;
  background: #e5e5e5;
}
.main-title {
  gap: 6px;
  padding: 0 6px 3px 2px;
}
.app-icon {
  width: 16px;
  height: 16px;
}
.captions {
  display: flex;
  gap: 13px;
  margin-left: auto;
}
.quick {
  position: relative;
  display: flex;
  align-items: center;
  gap: 10px;
  height: 36px;
  padding-left: 67px;
  background: #fff;
  border-bottom: 1px solid #cfcfcf;
}
.erp {
  position: absolute;
  left: 8px;
  top: 8px;
  width: 36px;
  height: 36px;
  border-radius: 50%;
  background: #f29725;
  box-shadow: 0 1px 1px #a8661a;
  color: #fff;
  font: 700 12px 'Open Sans', sans-serif;
}
.quick-btn {
  width: 16px;
  height: 16px;
}
.quick-btn svg {
  display: block;
}
.help {
  color: #4a79c4;
  font: 700 17px/16px 'Open Sans', sans-serif;
}
.doubts {
  position: absolute;
  right: 0;
  top: 0;
  width: 211px;
  height: 38px;
  padding-left: 20px;
  line-height: 38px;
  font-size: 16px;
  text-align: center;
  color: #fff;
  background: #ff9b37;
}
.menu {
  display: flex;
  gap: 1px;
  height: 28px;
  padding: 1px 0 2px 51px;
  background: #fff;
  border-bottom: 1px solid #cfcfcf;
  font: 13px 'Liberation Sans', sans-serif;
  color: #111;
}
.menu button {
  padding: 0 12px;
  border: 1px solid transparent;
  border-radius: 2px;
}
.menu .active {
  color: #fff;
  border-color: #17435c;
  background: #2b6080;
}
.ribbon {
  display: flex;
  gap: 3px;
  height: 101px;
  padding: 0 4px 1px;
  background: #f4f4f4;
  border-bottom: 1px solid #b5b6b8;
  box-shadow: 0 1px 2px #c8c8c8;
  font: 13px 'Liberation Sans', sans-serif;
}
.group {
  display: flex;
  flex-direction: column;
  border: 1px solid #8e9fab;
  border-bottom: 0;
  border-radius: 3px;
  background: #fff;
  overflow: hidden;
}
.group-body {
  display: flex;
  flex: 1;
}
.group h2 {
  margin: 0 -1px;
  height: 19px;
  line-height: 18px;
  font-size: 13px;
  font-weight: 400;
  text-align: center;
  color: #fff;
  background: linear-gradient(#115476, #103d58);
}
.big {
  display: flex;
  flex-direction: column;
  align-items: center;
  gap: 9px;
  padding: 12px 5px 0 10px;
}
.big svg {
  width: 30px;
  height: 25px;
}
.money {
  width: 21px;
  height: 25px;
  border-radius: 2px;
  background: #00577a;
  color: #fff;
  font: italic 700 20px/25px 'Liberation Sans', sans-serif;
}
.config {
  width: 104px;
  gap: 8px;
  padding: 10px 0 0;
}
.config svg {
  width: 28px;
  height: 28px;
}
.links {
  display: flex;
  flex-direction: column;
  justify-content: space-around;
  margin: 9px 0 10px;
  padding: 0 8px 0 9px;
  line-height: 26px;
  border-right: 1px solid #b0b1b3;
}
.links:first-child {
  margin: 2px 0 0;
  padding-left: 7px;
  border-right: 0;
  justify-content: flex-start;
}
.links:nth-child(2) {
  border-left: 1px solid #b0b1b3;
}
.doc-tabs {
  display: flex;
  align-items: flex-end;
  height: 32px;
  padding-left: 3px;
  gap: 1px;
  border-bottom: 1px solid #a5a6a8;
}
.doc-tab {
  display: flex;
  align-items: center;
  height: 27px;
  gap: 5px;
  padding: 0 4px;
  border: 1px solid #a5a6a8;
  border-bottom: 0;
  border-radius: 4px 4px 0 0;
  font-size: 14px;
}
.home {
  height: 26px;
  background: #f8f8f8;
  font-size: 13px;
}
.home a {
  color: #111;
}
.doc-tab svg {
  width: 16px;
  height: 16px;
}
.doc-tab button {
  width: 15px;
  height: 14px;
  border: 1px solid #8d8e90;
  font: 700 11px/10px 'Liberation Sans', sans-serif;
}
.grid-tools {
  height: 28px;
  border-bottom: 1px solid #b5b6b8;
  padding-right: 5px;
}
.sep {
  width: 1px;
  height: 22px;
  background: #a5a6a8;
}
.mode {
  margin-left: 7px;
  gap: 5px;
}
.grid-tools input {
  width: 150px;
  height: 22px;
  padding: 0 2px;
  border: 1px solid #98999b;
  background: #fff;
}
.others .caret {
  margin-left: 72px;
}
.contracts {
  flex: 1;
  display: flex;
  margin: 3px 3px 3px;
  border: 1px solid #98999b;
}
.table-box {
  flex: 1;
  min-width: 0;
}
.contracts table {
  font-size: 16px;
}
.c0 {
  width: 12px;
}
.c1 {
  width: 200px;
}
.c2 {
  width: 401px;
}
.c3 {
  width: 38px;
}
.c8 {
  width: 203px;
}
.contracts th,
.contracts td {
  height: 24px;
  padding: 0 2px;
  overflow: hidden;
  line-height: 20px;
  border-right: 1px solid #c9d4e6;
  border-bottom: 1px solid #c9d4e6;
}
.contracts th {
  background: linear-gradient(#fafafa, #e8e8e8);
  border-color: #bcbdbf;
}
.contracts tbody tr {
  background: #fff;
}
.contracts tbody tr:nth-child(even) {
  background: #f0f0f0;
}
.contracts tbody tr.selected {
  background: #ffe4bf;
  color: #000;
}
.contracts .mark {
  padding: 0;
  font-size: 9px;
  text-align: center;
  background: #f0f0f0;
  border-color: #bcbdbf;
}
.mark svg {
  width: 6px;
  height: 10px;
  fill: none;
  stroke: #3a3a3a;
  stroke-width: 2;
}
.scrollbar {
  display: flex;
  flex-direction: column;
  width: 17px;
  background: #c5c6c8;
  border-left: 1px solid #98999b;
}
.scrollbar > i {
  display: grid;
  place-items: center;
  height: 17px;
  background: #9c9d9f;
}
.scrollbar > i::after {
  content: '';
  border: 5px solid transparent;
}
.up::after {
  border-bottom: 5px solid #dcdcdc !important;
  border-top: 0 !important;
}
.down::after {
  border-top: 5px solid #dcdcdc !important;
  border-bottom: 0 !important;
}
.track {
  flex: 1;
  display: grid;
  grid-template-rows: 162fr 366fr 183fr;
}
.thumb {
  grid-row: 2;
  display: grid;
  place-items: center;
  border: 1px solid #4f5052;
  background: #d8d9db;
}
.thumb::after {
  content: '';
  width: 9px;
  height: 8px;
  background: repeating-linear-gradient(#4f5052 0 1px, transparent 1px 2px);
}
.status {
  display: flex;
  align-items: center;
  flex: none;
  height: 27px;
  background: #00577a;
  color: #fff;
}
.status > div {
  height: 23px;
  line-height: 24px;
  padding-left: 5px;
}
.status > div + div {
  border-left: 1px solid #fff;
}
.version {
  display: flex;
  gap: 4px;
  width: 352px;
}
.version svg {
  width: 18px;
  height: 18px;
  margin-top: 3px;
}
.brand {
  display: flex;
  flex-direction: column;
  font: 11px/13px 'DejaVu Sans', sans-serif;
  padding-top: 5px;
}
.brand small {
  font-size: 4px;
  line-height: 4px;
  opacity: 0.6;
}
.user {
  width: 253px;
}
</style>
